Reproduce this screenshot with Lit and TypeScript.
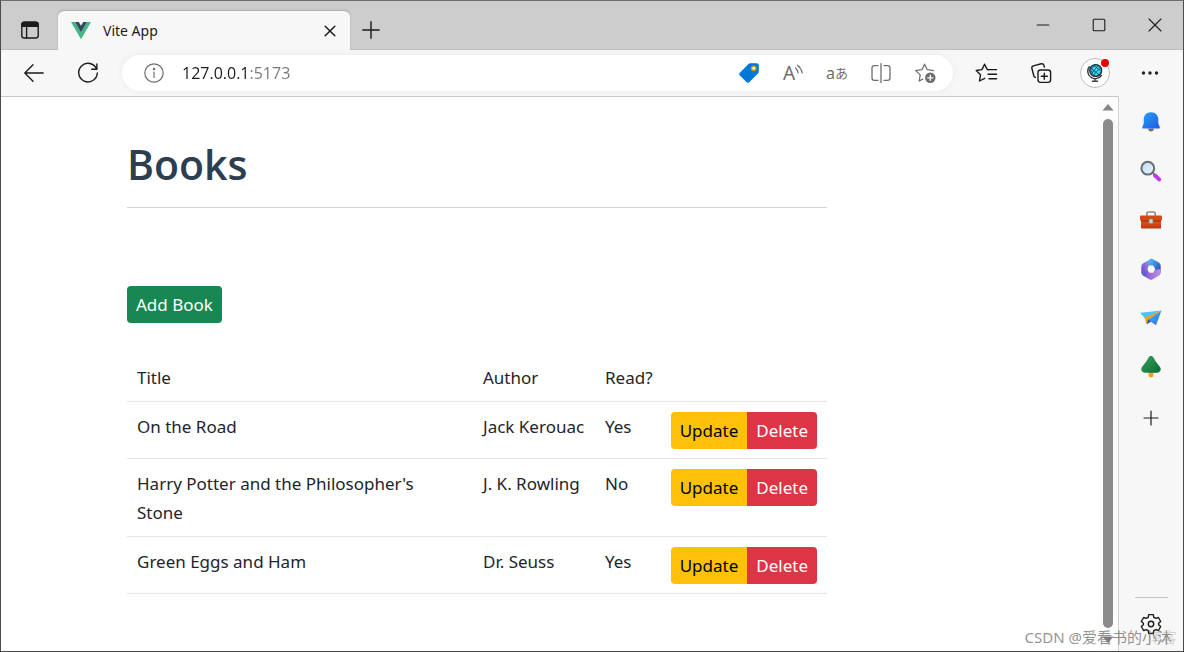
import { LitElement, html, css, svg } from "lit";
import { customElement, state } from "lit/decorators.js";

interface Book {
  title: string;
  author: string;
  read: boolean;
}

const line = (body: unknown, size = 24, width = 1.4) => html`<svg
  class="icon"
  width=${size}
  height=${size}
  viewBox="0 0 24 24"
  fill="none"
  stroke="currentColor"
  stroke-width=${width}
  stroke-linecap="round"
  stroke-linejoin="round"
  aria-hidden="true"
>${body}</svg>`;

const icons = {
  tabs: line(svg`<rect x="3.8" y="4.2" width="16.4" height="15.8" rx="2.6"/><path d="M4 8.2V6.5Q4 4.2 6.4 4.2h11.2Q20 4.2 20 6.5v1.7z" fill="currentColor"/><path d="M8.6 8v12"/>`),
  vue: html`<svg width="20" height="18" viewBox="0 0 20 18" aria-hidden="true"><path d="M0 0h4l6 10.4L16 0h4L10 17.3z" fill="#41b883"/><path d="M4 0h3.8L10 3.8 12.2 0H16l-6 10.4z" fill="#35495e"/></svg>`,
  close: line(svg`<path d="M7.2 7.2l9.6 9.6M16.8 7.2l-9.6 9.6"/>`, 24, 1.5),
  plus: line(svg`<path d="M12 3.8v16.4M3.8 12h16.4"/>`),
  smallPlus: line(svg`<path d="M12 5v14M5 12h14"/>`, 24, 1.2),
  minimize: line(svg`<path d="M6.2 12h11.6"/>`, 24, 1.1),
  maximize: line(svg`<rect x="6.2" y="6.2" width="11.6" height="11.6" rx="1"/>`, 24, 1.1),
  winClose: line(svg`<path d="M6 6l12 12M18 6L6 18"/>`, 24, 1.1),
  back: line(svg`<path d="M21.2 12H2.8M11 3.8L2.8 12l8.2 8.2"/>`),
  reload: line(svg`<path d="M20.6 8A9.3 9.3 0 1 0 21.3 12M20.9 3v5.2h-5.2"/>`),
  info: line(svg`<circle cx="12" cy="12" r="9.2"/><path d="M12 11v5.4"/><circle cx="12" cy="8" r=".6" fill="currentColor"/>`, 24, 1.2),
  tag: html`<svg width="24" height="24" viewBox="0 0 24 24" aria-hidden="true"><path d="M13.2 2.2h6.6q2 0 2 2v6.6q0 .8-.6 1.4l-9 9q-1.2 1.2-2.6 0l-6.8-6.8q-1.3-1.3 0-2.6l9-9q.6-.6 1.4-.6z" fill="#0078d7"/><circle cx="16.7" cy="7.3" r="2.1" fill="#fff" stroke="#c8a018" stroke-width="1.5"/></svg>`,
  waves: html`<svg width="8" height="12" viewBox="0 0 8 12" fill="none" stroke="currentColor" stroke-width="1.2" stroke-linecap="round" aria-hidden="true"><path d="M.5 4q2 1.600 2.600 5M2.500 1.200q3.600 2.600 4.800 7.800"/></svg>`,
  split: line(svg`<path d="M9 4.6H5.3Q3 4.6 3 6.9v10.2q0 2.3 2.3 2.3H9M15 4.6h3.7q2.3 0 2.3 2.3v10.2q0 2.3-2.3 2.3H15M12 2.6v18.8"/>`, 24, 1.3),
  starAdd: line(svg`<path d="M20.5 9.6l-6.2-.9-2.700-5.500-2.700 5.500-6.200.9 4.500 4.300-1 6.100 3.600-1.900"/><circle cx="17.300" cy="16.800" r="5.200" fill="#6b6b6b" stroke="none"/><path d="M17.300 14.200v5.200M14.700 16.800h5.200" stroke="#fff"/>`, 24, 1.3),
  favorites: line(svg`<path d="M13.500 8.800l-1.200-.2L9.600 3.200 6.900 8.600l-5.700.9 4.300 4.300-1 6.200 5.200-2.700M14 8.600h7.600M13 13.200h8.600M14 17.800h7.600"/>`, 24, 1.4),
  collections: line(svg`<rect x="9" y="9" width="12.600" height="12.400" rx="2.600"/><path d="M15.300 12.200v6M12.300 15.200h6M15.400 6l-.5-1.700q-.7-2-2.700-1.500L4.400 4.900q-2 .6-1.500 2.600l1.900 7.200q.4 1.400 1.600 1.700"/>`),
  globe: html`<svg width="18" height="20" viewBox="0 0 20 22" aria-hidden="true"><path d="M4 3.500a8.300 8.300 0 1 0 13.500 9.500" fill="none" stroke="#333" stroke-width="1.500"/><circle cx="10.800" cy="8.200" r="6.700" fill="#2385b5" stroke="#17232b" stroke-width="1.200"/><path d="M5.800 7.500l5-4.800 2.600.8-5.400 5.700zM9.500 12.500l6-6 1 2.700-4.400 4.300zM13 4l2 1.200-7 7-1.600-1.600z" fill="#41e0e6"/><path d="M5.500 5.500l9 7.500M9 2.500l7 6M13.500 2.500L6.500 11.500" stroke="#143a5c" stroke-width=".9" fill="none"/><path d="M10 17v2.500M6.500 20.200h7" stroke="#444" stroke-width="1.500"/></svg>`,
  more: html`<svg width="24" height="24" viewBox="0 0 24 24" aria-hidden="true"><g fill="#222"><circle cx="5.500" cy="12" r="1.700"/><circle cx="12" cy="12" r="1.700"/><circle cx="18.500" cy="12" r="1.700"/></g></svg>`,
  bell: html`<svg width="24" height="24" viewBox="0 0 24 24" aria-hidden="true"><defs><linearGradient id="bell" x1="0" y1="0" x2="1" y2="1"><stop stop-color="#22a3f5"/><stop offset="1" stop-color="#2357e8"/></linearGradient></defs><path d="M9 18.500h6q-.5 3-3 3t-3-3z" fill="#6f6f76"/><path d="M12 2.300c4.600 0 7.300 3.200 7.300 7.300v4l1.500 3.600q.4 1.200-.9 1.200H4.100q-1.300 0-.9-1.200l1.500-3.600v-4c0-4.100 2.700-7.300 7.300-7.300z" fill="url(#bell)"/></svg>`,
  search: html`<svg width="24" height="24" viewBox="0 0 24 24" aria-hidden="true"><defs><linearGradient id="lens" x1="0" y1="0" x2="1" y2="1"><stop stop-color="#b9dcf7"/><stop offset="1" stop-color="#eaf6ff"/></linearGradient></defs><path d="M13.500 13.500l3 3" stroke="#777" stroke-width="2"/><path d="M16 16.500l4.300 4" stroke="#c239e8" stroke-width="3.800" stroke-linecap="round"/><circle cx="8.800" cy="9.200" r="6.400" fill="url(#lens)" stroke="#6b6e70" stroke-width="2"/></svg>`,
  toolbox: html`<svg width="24" height="24" viewBox="0 0 24 24" aria-hidden="true"><defs><linearGradient id="box" x1="0" y1="0" x2="0" y2="1"><stop stop-color="#e8571c"/><stop offset="1" stop-color="#b8380f"/></linearGradient></defs><path d="M7.800 8V5.800q0-1.800 1.800-1.800h4.800q1.800 0 1.800 1.800V8" fill="none" stroke="#8c8c8c" stroke-width="1.600"/><rect x="2" y="12" width="20" height="8.600" rx="1.200" fill="url(#box)"/><rect x="1" y="7.600" width="22" height="5.200" rx="1.300" fill="#d34a17"/><path d="M2 13h20" stroke="#8f2d0b"/><rect x="10" y="11" width="4" height="4.600" rx="1.300" fill="#c9d0d4" stroke="#767d82" stroke-width=".6"/></svg>`,
  office: html`<svg width="24" height="24" viewBox="0 0 24 24" aria-hidden="true"><defs><linearGradient id="o1" x1="0" y1="1" x2="1" y2="0"><stop stop-color="#6a45c8"/><stop offset="1" stop-color="#a9a6f3"/></linearGradient><linearGradient id="o2" x1="0" y1="0" x2="1" y2="1"><stop stop-color="#4fc6f5"/><stop offset="1" stop-color="#2a3fb5"/></linearGradient><linearGradient id="o3" x1="0" y1="0" x2="1" y2="0"><stop stop-color="#3154c9"/><stop offset=".4" stop-color="#9b68d8"/><stop offset="1" stop-color="#bb91e6"/></linearGradient></defs><path d="M13 1.500L4.500 6Q2.300 7.200 2.300 9.500v6.700l7 0V9.500L13 7z" fill="url(#o1)"/><path d="M9.800 3.200Q12 1 14.500 2.400l5 2.900q2.200 1.200 2.200 3.700v6.800l-7-.8V10L9.500 8z" fill="url(#o2)"/><path d="M2.500 16q2.500 1 5-1.200l3.500-1 10.700-1.800v4q0 1.500-1.500 2.400l-6.500 3.800q-1.700 1-3.400 0L4 18.500Q2.700 17.700 2.500 16z" fill="url(#o3)"/><path d="M10.300 8.500h3.900l2 3.600-2 3.600h-3.900l-2-3.600z" fill="#f7f7f7"/></svg>`,
  plane: html`<svg width="24" height="24" viewBox="0 0 24 24" aria-hidden="true"><defs><linearGradient id="wing" x1="0" y1="0" x2="1" y2="1"><stop stop-color="#56b8f8"/><stop offset="1" stop-color="#1d6fe0"/></linearGradient></defs><path d="M1 6.800L22.500 4.500 6.500 13z" fill="#4fc3f2"/><path d="M22.500 4.500L17 19.200l-8.500-5.700z" fill="url(#wing)"/><path d="M22.500 4.500L5.600 11.800l1.900 6.400 1.700-4.600z" fill="#f5a314"/><path d="M7.500 18.200l1.700-4.600 2.800 1.800z" fill="#164a9c"/></svg>`,
  tree: html`<svg width="24" height="24" viewBox="0 0 24 24" aria-hidden="true"><defs><linearGradient id="leaf" x1="0" y1="0" x2="1" y2="1"><stop stop-color="#35a35c"/><stop offset="1" stop-color="#0c6b38"/></linearGradient></defs><rect x="9.600" y="16" width="4.800" height="6.200" rx="1.400" fill="#f2a31b"/><path d="M12 .8q1.500 0 2.600 1.900l2.200 3.700 4.200 5.600q1.600 2.700-.2 4.600-1.200 1.200-3.200 1.200H6.400q-2 0-3.200-1.200-1.800-1.900-.2-4.600l4.200-5.600 2.200-3.700Q10.500.8 12 .8z" fill="url(#leaf)"/></svg>`,
  gear: line(svg`<path d="M9.700 2.600h4.600l.5 2.700 2 1.100 2.600-.9 2.300 4-2.100 1.700v1.600l2.100 1.700-2.300 4-2.600-.9-2 1.100-.5 2.700H9.700l-.5-2.700-2-1.100-2.600.9-2.300-4 2.100-1.700v-1.600L2.300 9.500l2.300-4 2.600.9 2-1.100z"/><circle cx="12" cy="12" r="2.700"/>`),
};

@customElement("book-list")
class BookList extends LitElement {
  @state() private books: Book[] = [
    { title: "On the Road", author: "Jack Kerouac", read: true },
    { title: "Harry Potter and the Philosopher's Stone", author: "J. K. Rowling", read: false },
    { title: "Green Eggs and Ham", author: "Dr. Seuss", read: true },
  ];

  static styles = css`
    :host {
      display: block;
      max-width: 700px;
      color: #212529;
      font: 17px/29px "Noto Sans", "Open Sans", sans-serif;
    }
    h1 {
      margin: 0;
      color: #2c3e50;
      font-family: "Open Sans", "Noto Sans", sans-serif;
      font-size: 41px;
      font-weight: 600;
      line-height: 58px;
    }
    hr {
      margin: 14px 0 78px;
      border: 0;
      border-top: 1px solid #d3d4d5;
    }
    button {
      box-sizing: border-box;
      height: 37px;
      margin: 0;
      padding: 0 9px 1px;
      border: 0;
      border-radius: 4px;
      color: #fff;
      font: inherit;
      white-space: nowrap;
    }
    .add {
      display: block;
      background: #198754;
    }
    table {
      width: 100%;
      margin-top: 30px;
      border-collapse: separate;
      border-spacing: 0;
      table-layout: fixed;
    }
    th,
    td {
      box-sizing: border-box;
      padding: 10px 10px 9px;
      border-bottom: 1px solid #e3e5e7;
      font-weight: 400;
      text-align: left;
      vertical-align: top;
    }
    .author {
      width: 122px;
      white-space: nowrap;
    }
    .read {
      width: 68px;
      white-space: nowrap;
    }
    .actions {
      width: 164px;
    }
    .group {
      display: flex;
      justify-content: flex-end;
    }
    .update {
      border-radius: 4px 0 0 4px;
      background: #ffc107;
      color: #000;
    }
    .delete {
      border-radius: 0 4px 4px 0;
      background: #dc3545;
    }
  `;

  render() {
    return html`
      <h1>Books</h1>
      <hr />
      <button class="add" type="button">Add Book</button>
      <table>
        <thead>
          <tr>
            <th scope="col">Title</th>
            <th scope="col" class="author">Author</th>
            <th scope="col" class="read">Read?</th>
            <th class="actions"></th>
          </tr>
        </thead>
        <tbody>
          ${this.books.map(
            (b) => html`<tr>
              <td>${b.title}</td>
              <td class="author">${b.author}</td>
              <td>${b.read ? "Yes" : "No"}</td>
              <td>
                <div class="group">
                  <button class="update" type="button">Update</button>
                  <button class="delete" type="button">Delete</button>
                </div>
              </td>
            </tr>`,
          )}
        </tbody>
      </table>
    `;
  }
}

@customElement("app-root")
class AppRoot extends LitElement {
  static styles = css`
    :host {
      display: flex;
      position: relative;
      flex-direction: column;
      box-sizing: border-box;
      min-height: 100vh;
      border: 1px solid #4a4a4a;
      border-top-color: #6e6e6e;
      background: #f7f7f7;
      color: #1b1b1b;
      font: 15px/20px "Noto Sans", "Open Sans", sans-serif;
    }
    svg {
      display: block;
      flex: none;
    }
    button {
      display: flex;
      align-items: center;
      justify-content: center;
      flex: none;
      margin: 0;
      padding: 0;
      border: 0;
      background: none;
      color: inherit;
      font: inherit;
    }
    .strip {
      display: flex;
      height: 49px;
      background: #cdcdcd;
      box-shadow: inset 0 -1px #bdbdbd;
    }
    .tabs-menu {
      width: 57px;
      padding-top: 9px;
    }
    .tab {
      display: flex;
      align-items: center;
      box-sizing: border-box;
      width: 292px;
      margin-top: 10px;
      padding: 0 8px 0 13px;
      border-radius: 6px 6px 0 0;
      background: #f7f7f7;
      box-shadow: 0 -1px 2px #a9a9a9;
      clip-path: inset(-3px -3px 0 -3px);
    }
    .tab-title {
      flex: 1;
      margin-left: 12px;
      font-size: 14px;
    }
    .new-tab {
      width: 42px;
      padding-top: 9px;
    }
    .window {
      display: flex;
      margin-left: auto;
      padding-bottom: 2px;
    }
    .window button {
      width: 56px;
    }
    .toolbar {
      display: flex;
      align-items: center;
      height: 46px;
      padding: 0 5px 0 6px;
    }
    .toolbar > button {
      width: 54px;
      height: 46px;
    }
    .toolbar > .more {
      width: 56px;
    }
    .address {
      display: flex;
      flex: 1;
      align-items: center;
      height: 36px;
      margin: 0 7px;
      padding: 0 6px 0 20px;
      border-radius: 18px;
      background: #fff;
      box-shadow: 0 0 6px #e9e9e9;
      color: #6f6f6f;
    }
    .address button {
      width: 44px;
      height: 36px;
    }
    .address .info {
      width: 24px;
    }
    .url {
      flex: 1;
      min-width: 0;
      margin: 0 0 0 16px;
      padding: 0;
      border: 0;
      outline: 0;
      background: linear-gradient(90deg, #1b1b1b 67px, #767676 67px);
      background-clip: text;
      -webkit-background-clip: text;
      color: transparent;
      font-family: "Open Sans", "Noto Sans", sans-serif;
      font-size: 16px;
      line-height: 24px;
    }
    .read-aloud {
      font-size: 19px;
    }
    .read-aloud svg {
      margin-bottom: 7px;
    }
    .translate {
      font-family: "Noto Sans", "Noto Sans CJK JP", sans-serif;
      font-size: 16px;
    }
    .kana {
      font-size: 13px;
    }
    .avatar {
      display: flex;
      position: relative;
      align-items: center;
      justify-content: center;
      box-sizing: border-box;
      width: 30px;
      height: 30px;
      border: 1px solid #bcbcbc;
      border-radius: 50%;
      background: #fff;
    }
    .dot {
      position: absolute;
      top: 0;
      right: 0;
      width: 8px;
      height: 8px;
      border-radius: 50%;
      background: #e60000;
    }
    .body {
      display: flex;
      flex: 1;
    }
    .viewport {
      display: flex;
      flex: 1;
      box-sizing: border-box;
      border-top: 1px solid #c8c8c8;
      border-right: 1px solid #d3d3d3;
      background: #fff;
    }
    main {
      flex: 1;
      padding: 38px 126px 48px;
    }
    .scrollbar {
      display: flex;
      flex-direction: column;
      align-items: center;
      gap: 8px;
      width: 18px;
      padding: 6px 1px 7px;
      background: #fcfcfc;
    }
    .thumb {
      flex: 1;
      width: 10px;
      border-radius: 5px;
      background: #8b8b8b;
    }
    .sidebar {
      display: flex;
      flex-direction: column;
      align-items: center;
      box-sizing: border-box;
      width: 64px;
      padding: 1px 0 15px;
    }
    .sidebar button {
      width: 48px;
      height: 49px;
    }
    .sidebar .add-app {
      height: 54px;
    }
    .rule {
      width: 33px;
      margin: auto 0 14px;
      border-top: 1px solid #c2c2c2;
    }
    .sidebar .settings {
      height: 24px;
    }
    .mark,
    .mark-faint {
      position: absolute;
      right: 11px;
      bottom: 2px;
      color: rgb(110 110 110 / 75%);
      font: 15px/24px "Noto Sans", "Noto Sans CJK SC", sans-serif;
      pointer-events: none;
    }
    .mark-faint {
      right: 6px;
      color: rgb(110 110 110 / 25%);
    }
  `;

  private sidebarApps: [string, unknown][] = [
    ["Notifications", icons.bell],
    ["Search", icons.search],
    ["Tools", icons.toolbox],
    ["Microsoft 365", icons.office],
    ["Drop", icons.plane],
    ["Tree", icons.tree],
  ];

  render() {
    return html`
      <div class="strip">
        <button class="tabs-menu" aria-label="Tab actions">${icons.tabs}</button>
        <div class="tab">
          ${icons.vue}
          <span class="tab-title">Vite App</span>
          <button aria-label="Close tab">${icons.close}</button>
        </div>
        <button class="new-tab" aria-label="New tab">${icons.plus}</button>
        <div class="window">
          <button aria-label="Minimize">${icons.minimize}</button>
          <button aria-label="Maximize">${icons.maximize}</button>
          <button aria-label="Close">${icons.winClose}</button>
        </div>
      </div>
      <div class="toolbar">
        <button aria-label="Back">${icons.back}</button>
        <button aria-label="Refresh">${icons.reload}</button>
        <div class="address">
          <button class="info" aria-label="Site information">${icons.info}</button>
          <input class="url" type="text" aria-label="Address" .value=${"127.0.0.1:5173"} />
          <button aria-label="Shopping">${icons.tag}</button>
          <button class="read-aloud" aria-label="Read aloud">A${icons.waves}</button>
          <button class="translate" aria-label="Translate">a<span class="kana">あ</span></button>
          <button aria-label="Split screen">${icons.split}</button>
          <button aria-label="Add to favorites">${icons.starAdd}</button>
        </div>
        <button aria-label="Favorites">${icons.favorites}</button>
        <button aria-label="Collections">${icons.collections}</button>
        <button aria-label="Profile">
          <span class="avatar">${icons.globe}<span class="dot"></span></span>
        </button>
        <button class="more" aria-label="Settings and more">${icons.more}</button>
      </div>
      <div class="body">
        <div class="viewport">
          <main><book-list></book-list></main>
          <div class="scrollbar">
            <svg width="12" height="8" viewBox="0 0 12 8"><path d="M6 1l5.500 6.500H.5z" fill="#858585" /></svg>
            <div class="thumb"></div>
            <svg width="12" height="8" viewBox="0 0 12 8"><path d="M6 7L.5.5h11z" fill="#858585" /></svg>
          </div>
        </div>
        <aside class="sidebar">
          ${this.sidebarApps.map(([name, icon]) => html`<button aria-label=${name}>${icon}</button>`)}
          <button class="add-app" aria-label="Customize">${icons.smallPlus}</button>
          <div class="rule"></div>
          <button class="settings" aria-label="Settings">${icons.gear}</button>
        </aside>
      </div>
      <div class="mark-faint">博客</div>
      <div class="mark">CSDN @爱看书的小沐</div>
    `;
  }
}
